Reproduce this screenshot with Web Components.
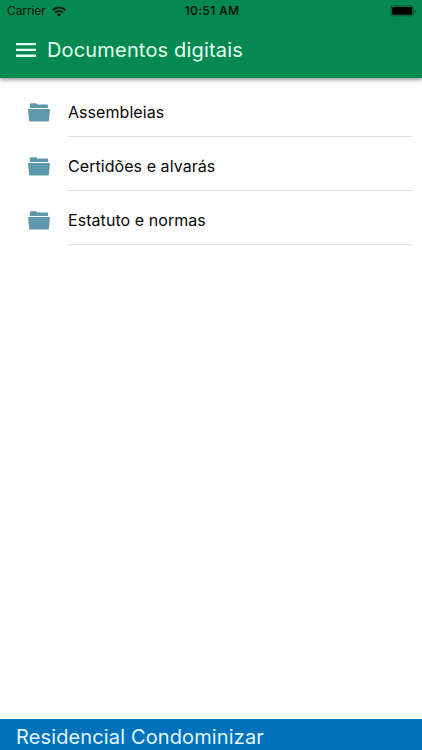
<!DOCTYPE html>
<html lang="pt-BR">
<head>
<meta charset="utf-8">
<title>Documentos digitais</title>
<style>
  html, body {
    margin: 0;
    height: 100%;
    overflow: hidden;
    background: #fff;
    font-family: Inter, "Liberation Sans", sans-serif;
  }
</style>
</head>
<body>
<app-shell>
  <app-header slot="header">
    <status-bar slot="status" carrier="Carrier" time="10:51 AM"></status-bar>
    Documentos digitais
  </app-header>
  <folder-item>Assembleias</folder-item>
  <folder-item>Certidões e alvarás</folder-item>
  <folder-item>Estatuto e normas</folder-item>
  <app-footer slot="footer">Residencial Condominizar</app-footer>
</app-shell>

<script>
class AppShell extends HTMLElement {
  constructor() {
    super();
    this.attachShadow({mode: 'open'}).innerHTML = `
      <style>
        :host {
          display: flex;
          flex-direction: column;
          height: 100vh;
        }
        main {
          flex: 1;
          padding: 5px 10px 0 28px;
        }
      </style>
      <slot name="header"></slot>
      <main><slot></slot></main>
      <slot name="footer"></slot>
    `;
  }
}

class StatusBar extends HTMLElement {
  constructor() {
    super();
    this.attachShadow({mode: 'open'});
  }

  connectedCallback() {
    this.shadowRoot.innerHTML = `
      <style>
        :host {
          display: grid;
          grid-template-columns: 1fr auto 1fr;
          align-items: center;
          height: 22px;
          padding: 0 5px 0 7px;
          box-sizing: border-box;
          color: #03140c;
          font-size: 12px;
          line-height: 22px;
        }
        .carrier {
          display: flex;
          align-items: center;
          gap: 6px;
          letter-spacing: -0.1px;
        }
        .time {
          font-weight: 600;
          letter-spacing: 0.3px;
        }
        .battery {
          justify-self: end;
        }
        svg {
          display: block;
        }
      </style>
      <div class="carrier">
        <span>${this.getAttribute('carrier')}</span>
        <svg width="14" height="11" viewBox="0 0 14 11" fill="none" stroke="currentColor" stroke-width="2">
          <path d="M0.8 4.1C4.3 0.7 9.7 0.7 13.2 4.1"/>
          <path d="M3.1 6.6C5.3 4.5 8.7 4.5 10.9 6.6"/>
          <path d="M7 10.6L4.8 8.4Q7 6.6 9.2 8.4Z" fill="currentColor" stroke="none"/>
        </svg>
      </div>
      <span class="time">${this.getAttribute('time')}</span>
      <svg class="battery" width="27" height="12" viewBox="0 0 27 12">
        <rect x="0.9" y="0.9" width="22.6" height="10" rx="2.4" fill="none" stroke="#04552f" stroke-width="1"/>
        <rect x="2.1" y="2.1" width="20.2" height="7.6" rx="1" fill="#000"/>
        <path d="M24.8 4.2Q26.2 4.9 26.2 6T24.8 7.8Z" fill="#04552f"/>
      </svg>
    `;
  }
}

class AppHeader extends HTMLElement {
  constructor() {
    super();
    this.attachShadow({mode: 'open'}).innerHTML = `
      <style>
        :host {
          display: block;
          height: 78px;
          background: #048a50;
          box-shadow: 0 1px 5px rgba(0, 0, 0, 0.55);
        }
        .toolbar {
          display: flex;
          align-items: center;
          height: 56px;
          padding-left: 16px;
          gap: 11px;
          color: #e2fff2;
        }
        h1 {
          margin: 0;
          font-size: 20px;
          font-weight: 400;
          line-height: 24px;
          letter-spacing: 0.17px;
          white-space: nowrap;
        }
        svg {
          display: block;
          margin-top: -1px;
        }
      </style>
      <slot name="status"></slot>
      <div class="toolbar">
        <svg width="20" height="14" viewBox="0 0 20 14" fill="currentColor">
          <path d="M0 0h20v2.3H0zM0 5.8h20v2.3H0zM0 11.6h20v2.3H0z"/>
        </svg>
        <h1><slot></slot></h1>
      </div>
    `;
  }
}

class FolderItem extends HTMLElement {
  constructor() {
    super();
    this.attachShadow({mode: 'open'}).innerHTML = `
      <style>
        :host {
          display: flex;
          height: 54px;
          gap: 18px;
        }
        svg {
          display: block;
          margin-top: 20px;
          fill: #5e98ab;
        }
        .label {
          flex: 1;
          box-sizing: border-box;
          border-bottom: 1px solid #dedede;
          padding-top: 18px;
          color: #080808;
          font-size: 16px;
          line-height: 22px;
          letter-spacing: 0.06px;
        }
      </style>
      <svg width="22" height="19" viewBox="0 0 22 19">
        <path d="M1.8 5V1.3Q1.8 0.2 2.9 0.2H7.8Q8.6 0.2 9 0.9L9.4 1.6H19Q20.1 1.6 20.1 2.7V5Z"/>
        <path d="M0.9 6H21.1Q22 6 21.9 7L20.9 17.4Q20.8 18.6 19.6 18.6H2.4Q1.2 18.6 1.1 17.4L0.1 7Q0 6 0.9 6Z"/>
      </svg>
      <div class="label"><slot></slot></div>
    `;
  }
}

class AppFooter extends HTMLElement {
  constructor() {
    super();
    this.attachShadow({mode: 'open'}).innerHTML = `
      <style>
        :host {
          display: block;
          height: 31px;
          box-sizing: border-box;
          padding: 6px 0 0 16px;
          background: #0072bc;
          color: #e2f7ff;
          font-size: 20px;
          line-height: 25px;
          letter-spacing: 0.13px;
        }
      </style>
      <slot></slot>
    `;
  }
}

customElements.define('app-shell', AppShell);
customElements.define('status-bar', StatusBar);
customElements.define('app-header', AppHeader);
customElements.define('folder-item', FolderItem);
customElements.define('app-footer', AppFooter);
</script>
</body>
</html>
